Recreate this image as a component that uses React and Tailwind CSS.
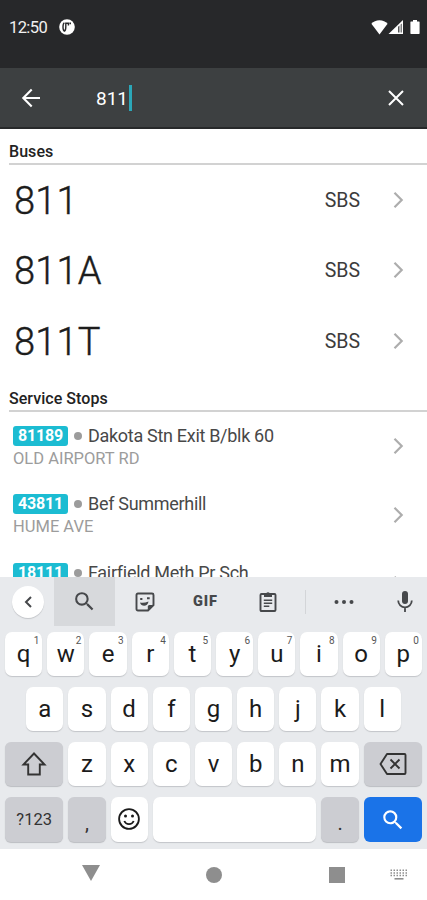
const BUSES = [
  { no: '811', operator: 'SBS' },
  { no: '811A', operator: 'SBS' },
  { no: '811T', operator: 'SBS' },
];

const STOPS = [
  { code: '81189', name: 'Dakota Stn Exit B/blk 60', road: 'OLD AIRPORT RD' },
  { code: '43811', name: 'Bef Summerhill', road: 'HUME AVE' },
  { code: '18111', name: 'Fairfield Meth Pr Sch', road: '' },
];

const TOP_ROW = [
  ['q', '1'],
  ['w', '2'],
  ['e', '3'],
  ['r', '4'],
  ['t', '5'],
  ['y', '6'],
  ['u', '7'],
  ['i', '8'],
  ['o', '9'],
  ['p', '0'],
];
const MIDDLE_ROW = ['a', 's', 'd', 'f', 'g', 'h', 'j', 'k', 'l'];
const BOTTOM_ROW = ['z', 'x', 'c', 'v', 'b', 'n', 'm'];

function SearchIcon({ className }) {
  return (
    <svg viewBox="0 0 24 24" className={className} fill="currentColor">
      <path d="M15.5 14h-.79l-.28-.27A6.47 6.47 0 0 0 16 9.5 6.5 6.5 0 1 0 9.5 16c1.61 0 3.09-.59 4.23-1.57l.27.28v.79l5 4.99L20.49 19l-4.99-5zm-6 0C7.01 14 5 11.99 5 9.5S7.01 5 9.5 5 14 7.01 14 9.5 11.99 14 9.5 14z" />
    </svg>
  );
}

function Chevron() {
  return (
    <svg viewBox="0 0 12 18" className="mr-[22px] h-[18px] w-3 shrink-0" fill="none">
      <path d="M1.5 1.800l7.200 7.200-7.200 7.200" stroke="#adadad" strokeWidth="2.2" />
    </svg>
  );
}

function StatusBar() {
  return (
    <div className="flex h-[68px] items-start bg-[#27282a] pt-[18px] text-white">
      <span className="ml-[9px] w-[50px] text-[16.5px] leading-5 tracking-[-0.6px] text-[#f1f1f1]">12:50</span>
      <svg viewBox="0 0 16 16" className="mt-px h-4 w-4">
        <circle cx="8" cy="8" r="7.8" fill="#fff" />
        <path
          d="M5.400 3.800q-1.400.6-1.400 4.200t1.400 4.200q1.400-.6 1.400-4.200V4.200H9.400v2.400"
          fill="none"
          stroke="#27282a"
          strokeWidth="1.400"
        />
        <path d="M10.400 3.400h1.600v1.800h-1.600z" fill="#27282a" />
      </svg>
      <div className="mt-[1px] ml-auto flex items-center pr-[7px]">
        <svg viewBox="0 0 17 16" className="h-4 w-[17px]">
          <path d="M8.5 15.4L.4 4.7C2.4 2.8 5.2 1.3 8.5 1.3s6.100 1.500 8.100 3.400z" fill="#fff" />
        </svg>
        <svg viewBox="0 0 16 16" className="h-4 w-4">
          <path d="M0.500 15L15 1v14z" fill="#fff" />
          <path d="M10.200 7.700L11.400 6.500V13.400H10.200zM13.600 4.600v8.800h-.9V5.500z" fill="#27282a" />
        </svg>
        <svg viewBox="0 0 10 16" className="ml-[6px] h-4 w-[10px]">
          <path d="M1 2.400h2V1h4v1.400h2q.6 0 .6.700v11.200q0 .7-.6.700H1q-.6 0-.6-.7V3.100q0-.7.6-.7z" fill="#fff" />
        </svg>
      </div>
    </div>
  );
}

function SearchBar() {
  return (
    <div className="flex h-[61px] items-center border-b-2 border-[#27292a] bg-[#3d4041] text-white">
      <svg viewBox="0 0 20 20" className="ml-[21px] h-5 w-5" fill="none" stroke="currentColor" strokeWidth="2.1">
        <path d="M19 10H2.600M10.700 1.600L2.300 10l8.400 8.400" />
      </svg>
      <div className="ml-[55px] flex items-center">
        <span className="pt-0.5 text-[19px] leading-6">811</span>
        <span className="ml-px h-[26px] w-[3px] bg-[#2ba7b8]" />
      </div>
      <svg viewBox="0 0 16 16" className="mr-[23px] ml-auto h-4 w-4" fill="none" stroke="currentColor" strokeWidth="2">
        <path d="M1 1l14 14M15 1L1 15" />
      </svg>
    </div>
  );
}

function SectionHeader({ children }) {
  return (
    <h2 className="ml-[9px] border-b-2 border-[#d2d2d2] pb-px text-[16px] leading-[21px] font-medium tracking-[0.05px] text-[#222]">
      {children}
    </h2>
  );
}

function BusRow({ bus }) {
  return (
    <div className="flex h-[70.3px] shrink-0 items-center">
      <span className="ml-[14px] flex-1 pt-0.5 text-[38px] leading-[44px] font-light tracking-[0.15px] text-[#1c1c1c] [-webkit-text-stroke:0.4px_#1c1c1c]">
        {bus.no}
      </span>
      <span className="mr-[33px] pt-0.5 text-[19.5px] leading-5 text-[#3c3c3c]">{bus.operator}</span>
      <Chevron />
    </div>
  );
}

function StopRow({ stop }) {
  return (
    <div className="flex h-[68.7px] shrink-0 items-center">
      <div className="ml-[13px] flex-1 pt-0.5">
        <div className="flex h-5 items-center">
          <span className="flex h-5 w-[55px] items-center justify-center rounded-[3px] bg-[#1cbcd2] text-[16px] font-bold tracking-[-0.2px] text-white">
            {stop.code}
          </span>
          <span className="mx-1.5 h-2 w-2 rounded-full bg-[#9c9c9c]" />
          <span className="text-[18px] leading-5 tracking-[-0.3px] text-[#484848]">{stop.name}</span>
        </div>
        <div className="mt-[3px] h-5 text-[16.5px] leading-5 text-[#9c9c9c]">{stop.road}</div>
      </div>
      <Chevron />
    </div>
  );
}

function Key({ children, hint, className = 'h-11' }) {
  return (
    <div
      className={`relative flex w-[37.2px] shrink-0 items-center justify-center rounded-[7px] bg-white pb-[1px] text-[24px] text-[#1b1b1b] shadow-[0_1px_1px_#c3c5c9] ${className}`}
    >
      {children}
      {hint && <span className="absolute top-[3px] right-[3px] text-[10px] leading-3 text-[#555]">{hint}</span>}
    </div>
  );
}

function DarkKey({ children, className }) {
  return (
    <div
      className={`flex shrink-0 items-center justify-center rounded-[6px] bg-[#cccdd2] text-[#333] shadow-[0_1px_1px_#bbbdc1] ${className}`}
    >
      {children}
    </div>
  );
}

function Toolbar() {
  return (
    <div className="flex h-[49px] items-center text-[#46484b]">
      <div className="ml-3 flex h-8 w-8 items-center justify-center rounded-full bg-white shadow-[0_1px_1px_#c3c5c9]">
        <svg viewBox="0 0 8 12" className="h-3 w-2" fill="none" stroke="currentColor" strokeWidth="2">
          <path d="M7 1L2 6l5 5" />
        </svg>
      </div>
      <div className="ml-[10px] flex h-full w-[61px] items-center justify-center bg-[#d7d9dc]">
        <SearchIcon className="h-[25px] w-[25px]" />
      </div>
      {/* sticker */}
      <svg viewBox="0 0 20 20" className="ml-5 h-5 w-5" fill="none" stroke="currentColor" strokeWidth="1.9">
        <path d="M3 1.500h14q1.500 0 1.500 1.500v10l-5.500 5.500H3Q1.500 18.500 1.500 17V3Q1.500 1.500 3 1.500z" />
        <path d="M12.800 18.500v-4q0-1.500 1.500-1.500h4.200z" fill="currentColor" stroke="none" />
        <path d="M5.200 7h2.200M12 6.200h2.700" />
        <path d="M5 10.500q4 .8 8.500-1c-.5 5.200-7.300 5.600-8.500 1z" fill="currentColor" stroke="none" />
      </svg>
      <span className="ml-[38px] w-[26px] text-[14.5px] font-black tracking-[0.9px]">GIF</span>
      {/* clipboard */}
      <svg viewBox="0 0 18 21" className="ml-[40px] h-[21px] w-[18px]" fill="none" stroke="currentColor" strokeWidth="1.900">
        <path d="M2.500 3h13q1 0 1 1v15q0 1-1 1h-13q-1 0-1-1V4q0-1 1-1z" />
        <path d="M5 2.500h2.200a1.900 1.900 0 0 1 3.600 0H13V6H5z" fill="currentColor" stroke="none" />
        <path d="M4.800 9.300h8.400M4.800 12.300h8.400M4.800 15.300h5.500" strokeWidth="1.600" />
      </svg>
      <span className="ml-[28px] h-6 w-px bg-[#d3d5d8]" />
      <svg viewBox="0 0 20 4" className="ml-[28px] h-1 w-5" fill="currentColor">
        <circle cx="2.500" cy="2" r="2" />
        <circle cx="10" cy="2" r="2" />
        <circle cx="17.500" cy="2" r="2" />
      </svg>
      <svg viewBox="0 0 16 21" className="ml-[43px] h-[21px] w-4" fill="none" stroke="currentColor" strokeWidth="1.800">
        <rect x="5" y="0" width="6" height="13" rx="3" fill="currentColor" stroke="none" />
        <path d="M1.200 9.500a6.800 6.800 0 0 0 13.600 0M8 16.300V21" />
      </svg>
    </div>
  );
}

function Keyboard() {
  return (
    <div className="h-[272px] shrink-0 bg-[#e8eaed]">
      <Toolbar />
      <div className="mt-[6px] flex flex-col gap-[11px]">
        <div className="flex justify-center gap-[5px]">
          {TOP_ROW.map(([letter, hint]) => (
            <Key key={letter} hint={hint}>
              {letter}
            </Key>
          ))}
        </div>
        <div className="flex justify-center gap-[5px]">
          {MIDDLE_ROW.map((letter) => (
            <Key key={letter}>{letter}</Key>
          ))}
        </div>
        <div className="flex justify-center gap-[5px]">
          <DarkKey className="h-11 w-[58.3px]">
            <svg viewBox="0 0 26 24" className="h-6 w-[26px]" fill="none" stroke="currentColor" strokeWidth="1.900">
              <path d="M13 1.500L2.500 12.500h4.700V22.500h11.600V12.500h4.700z" />
            </svg>
          </DarkKey>
          {BOTTOM_ROW.map((letter) => (
            <Key key={letter}>{letter}</Key>
          ))}
          <DarkKey className="h-11 w-[58.3px]">
            <svg viewBox="0 0 28 22" className="h-[22px] w-7" fill="none" stroke="currentColor" strokeWidth="1.900">
              <path d="M8 1h17.500q1 0 1 1v18q0 1-1 1H8L1.500 11z" strokeLinejoin="round" />
              <path d="M11.500 6.500l9 9M20.500 6.500l-9 9" />
            </svg>
          </DarkKey>
        </div>
        <div className="flex justify-center gap-[5px]">
          <DarkKey className="h-[45px] w-[58.3px] pt-0.5 text-[16.5px]">?123</DarkKey>
          <DarkKey className="h-[45px] w-[37.2px] pt-[7px] text-[20px]">,</DarkKey>
          <Key className="h-[45px]">
            <svg viewBox="0 0 22 22" className="h-[22px] w-[22px]" fill="none" stroke="currentColor" strokeWidth="1.800">
              <circle cx="11" cy="11" r="9.900" />
              <path d="M6.300 13a5.100 5.100 0 0 0 9.400 0" />
              <circle cx="7.500" cy="8" r="1.500" fill="currentColor" stroke="none" />
              <circle cx="14.500" cy="8" r="1.500" fill="currentColor" stroke="none" />
            </svg>
          </Key>
          <div className="h-[45px] w-[163.800px] rounded-[7px] bg-white shadow-[0_1px_1px_#c3c5c9]" />
          <DarkKey className="h-[45px] w-[37.2px] pt-[7px] text-[20px]">.</DarkKey>
          <div className="flex h-[45px] w-[58.3px] items-center justify-center rounded-[6px] bg-[#1a73e8] text-white">
            <SearchIcon className="h-[26px] w-[26px]" />
          </div>
        </div>
      </div>
    </div>
  );
}

function NavBar() {
  return (
    <div className="flex h-[51px] shrink-0 items-center bg-white text-[#8e8e8e]">
      <svg viewBox="0 0 18 16" className="mb-[3px] ml-[82px] h-4 w-[18px]" fill="currentColor">
        <path d="M0 0h18L9 16z" />
      </svg>
      <span className="ml-[106px] h-4 w-4 rounded-full bg-current" />
      <span className="ml-[107px] h-4 w-4 bg-current" />
      <svg viewBox="0 0 18 11" className="ml-[45px] h-[11px] w-[18px]" stroke="currentColor">
        <path d="M.5 1.200h17M.5 3.900h17M.5 6.600h17" strokeWidth="1.500" strokeDasharray="1.500 1.500" />
        <path d="M4.500 9.800h9" strokeWidth="1.600" />
      </svg>
    </div>
  );
}

export default function App() {
  return (
    <div className="flex h-[900px] w-[427px] flex-col overflow-hidden bg-white font-[Roboto,sans-serif]">
      <StatusBar />
      <SearchBar />
      <div className="flex h-[448px] shrink-0 flex-col overflow-hidden pt-3">
        <SectionHeader>Buses</SectionHeader>
        <div>
          {BUSES.map((bus) => (
            <BusRow key={bus.no} bus={bus} />
          ))}
        </div>
        <div className="mt-3">
          <SectionHeader>Service Stops</SectionHeader>
        </div>
        {STOPS.map((stop) => (
          <StopRow key={stop.code} stop={stop} />
        ))}
      </div>
      <Keyboard />
      <NavBar />
    </div>
  );
}
